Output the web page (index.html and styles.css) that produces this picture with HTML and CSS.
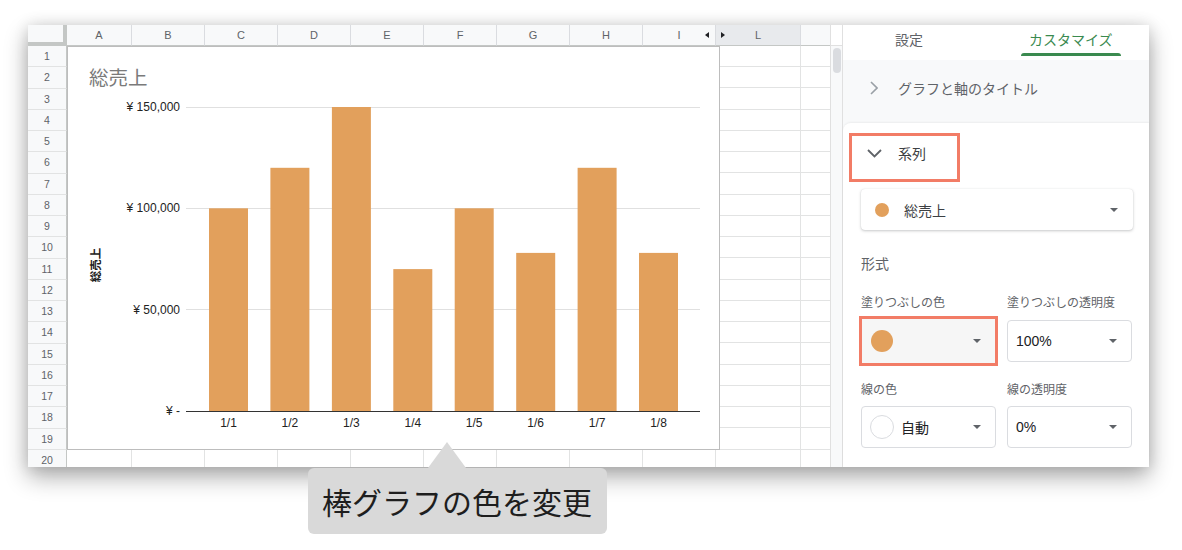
FILE: index.html
```html
<!DOCTYPE html>
<html lang="ja">
<head>
<meta charset="utf-8">
<title>棒グラフの色を変更</title>
<link rel="stylesheet" href="styles.css">
</head>
<body>
<div class="frame">
  <div class="sheet">
    <div class="colhead">
      <div class="corner"></div>
      <div class="ch ch-a">A</div>
      <div class="ch">B</div>
      <div class="ch">C</div>
      <div class="ch">D</div>
      <div class="ch">E</div>
      <div class="ch">F</div>
      <div class="ch">G</div>
      <div class="ch">H</div>
      <div class="ch">I<span class="arr arr-l"></span></div>
      <div class="ch ch-l">L<span class="arr arr-r"></span></div>
      <div class="ch ch-blank"></div>
      <div class="ch-scroll"></div>
    </div>
    <div class="sheet-body">
      <div class="rowheads">
        <div class="rh">1</div><div class="rh">2</div><div class="rh">3</div><div class="rh">4</div>
        <div class="rh">5</div><div class="rh">6</div><div class="rh">7</div><div class="rh">8</div>
        <div class="rh">9</div><div class="rh">10</div><div class="rh">11</div><div class="rh">12</div>
        <div class="rh">13</div><div class="rh">14</div><div class="rh">15</div><div class="rh">16</div>
        <div class="rh">17</div><div class="rh">18</div><div class="rh">19</div><div class="rh">20</div>
      </div>
      <div class="cells">
        <div class="col col-a"></div>
        <div class="col"></div><div class="col"></div><div class="col"></div><div class="col"></div>
        <div class="col"></div><div class="col"></div><div class="col"></div><div class="col"></div>
        <div class="col col-l"></div>
        <div class="col col-blank"></div>
      </div>
      <div class="vscroll"><div class="thumb"></div></div>
    </div>
    <div class="chart">
      <svg width="651" height="402" viewBox="0 0 651 402">
        <text class="c-title" x="21" y="29">総売上</text>
        <g class="gridlines">
          <line x1="118" x2="632" y1="60.5" y2="60.5"/>
          <line x1="118" x2="632" y1="161.5" y2="161.5"/>
          <line x1="118" x2="632" y1="262.5" y2="262.5"/>
        </g>
        <g class="ylabs">
          <text x="112" y="60">¥ 150,000</text>
          <text x="112" y="161">¥ 100,000</text>
          <text x="112" y="263">¥ 50,000</text>
          <text x="112" y="364">¥ -</text>
        </g>
        <g class="bars">
          <rect x="141" y="161.3" width="39" height="202.7"/>
          <rect x="202.4" y="120.8" width="39" height="243.2"/>
          <rect x="263.9" y="60" width="39" height="304"/>
          <rect x="325.3" y="222.1" width="39" height="141.9"/>
          <rect x="386.7" y="161.3" width="39" height="202.7"/>
          <rect x="448.2" y="205.9" width="39" height="158.1"/>
          <rect x="509.6" y="120.8" width="39" height="243.2"/>
          <rect x="571" y="205.9" width="39" height="158.1"/>
        </g>
        <line class="axis" x1="118" x2="632" y1="364.5" y2="364.5"/>
        <g class="xlabs">
          <text x="160.5" y="376">1/1</text>
          <text x="221.9" y="376">1/2</text>
          <text x="283.4" y="376">1/3</text>
          <text x="344.8" y="376">1/4</text>
          <text x="406.2" y="376">1/5</text>
          <text x="467.7" y="376">1/6</text>
          <text x="529.1" y="376">1/7</text>
          <text x="590.5" y="376">1/8</text>
        </g>
        <text class="ytitle" transform="translate(27 218) rotate(-90)">総売上</text>
      </svg>
    </div>
  </div>

  <div class="panel">
    <div class="tabs">
      <div class="tab">設定</div>
      <div class="tab tab-active">カスタマイズ</div>
    </div>
    <div class="acc-row">
      <svg class="chev-r" width="8" height="14" viewBox="0 0 8 14"><path d="M1 1 L7 7 L1 13" fill="none" stroke="#9aa0a6" stroke-width="1.6"/></svg>
      <span>グラフと軸のタイトル</span>
    </div>
    <div class="card">
      <div class="sec-head">
        <svg width="15" height="9" viewBox="0 0 15 9"><path d="M1 1 L7.5 7.5 L14 1" fill="none" stroke="#5f6368" stroke-width="1.8"/></svg>
        <span>系列</span>
      </div>
      <div class="series">
        <span class="dot"></span>
        <span class="series-name">総売上</span>
        <span class="caret"></span>
      </div>
      <div class="fmt-label">形式</div>
      <div class="grid2 labels1">
        <div class="field-label">塗りつぶしの色</div>
        <div class="field-label">塗りつぶしの透明度</div>
      </div>
      <div class="grid2 controls1">
        <div class="dd-active">
          <span class="swatch"></span>
          <span class="caret"></span>
        </div>
        <div class="dd"><span>100%</span><span class="caret"></span></div>
      </div>
      <div class="grid2 labels2">
        <div class="field-label">線の色</div>
        <div class="field-label">線の透明度</div>
      </div>
      <div class="grid2 controls2">
        <div class="dd dd-wide"><span class="swatch-empty"></span><span class="auto">自動</span><span class="caret"></span></div>
        <div class="dd"><span>0%</span><span class="caret"></span></div>
      </div>
    </div>
  </div>
</div>
<div class="tip">棒グラフの色を変更</div>
</body>
</html>
```
FILE: styles.css
```css
* { box-sizing: border-box; }
html, body { margin: 0; background: #fff; }
body {
  width: 1182px;
  height: 550px;
  overflow: hidden;
  position: relative;
  padding: 25px 0 0 28px;
  font-family: "Liberation Sans", "Noto Sans CJK JP", sans-serif;
}

.frame {
  display: flex;
  width: 1121px;
  height: 442px;
  background: #fff;
  box-shadow: 0 10px 22px rgba(0,0,0,0.32), 0 0 14px rgba(0,0,0,0.12);
}

/* ---------- sheet ---------- */
.sheet {
  width: 814px;
  flex: none;
  position: relative;
  display: flex;
  flex-direction: column;
  overflow: hidden;
}
.colhead { display: flex; height: 21px; flex: none; }
.corner {
  width: 39px;
  background: #f8f9fa;
  border-right: 4px solid #c4c7c5;
  border-bottom: 4px solid #c4c7c5;
}
.ch {
  width: 73px;
  position: relative;
  background: #f8f9fa;
  border-right: 1px solid #dadce0;
  border-bottom: 1px solid #c4c7c5;
  font-size: 11px;
  color: #5f6368;
  display: flex;
  align-items: center;
  justify-content: center;
}
.ch-a { width: 65px; }
.ch-l { width: 85px; background: #e8eaed; }
.ch-blank { width: 29px; border-right: none; }
.ch-scroll { width: 12px; background: #fff; border-left: 1px solid #e0e0e0; border-bottom: 1px solid #e0e0e0; }
.arr {
  position: absolute;
  top: 7px;
  width: 0; height: 0;
  border-top: 3px solid transparent;
  border-bottom: 3px solid transparent;
}
.arr-l { right: 6px; border-right: 4px solid #202124; }
.arr-r { left: 5px; border-left: 4px solid #202124; }

.sheet-body { display: flex; flex: 1; min-height: 0; }
.rowheads { width: 39px; flex: none; }
.rh {
  height: 21.25px;
  background: #f8f9fa;
  border-right: 1px solid #c4c7c5;
  border-bottom: 1px solid #e2e3e3;
  font-size: 10.5px;
  color: #5f6368;
  display: flex;
  align-items: center;
  justify-content: center;
}
.cells {
  display: flex;
  width: 763px;
  flex: none;
  background: repeating-linear-gradient(to bottom, #fff 0, #fff 20.25px, #e2e3e3 20.25px, #e2e3e3 21.25px);
}
.col { width: 73px; flex: none; border-right: 1px solid #e2e3e3; }
.col-a { width: 65px; }
.col-l { width: 85px; }
.col-blank { width: 29px; border-right: none; }
.vscroll {
  width: 12px;
  flex: none;
  border-left: 1px solid #e0e0e0;
  background: #f8f9fa;
  padding: 2px 0 0 2px;
}
.thumb { width: 8px; height: 25px; background: #dadce0; border-radius: 4px; }

.chart {
  position: absolute;
  left: 39px;
  top: 21px;
  width: 653px;
  height: 404px;
  background: #fff;
  border: 1px solid #bdbdbd;
}
.chart svg { display: block; }
.c-title {
  font-family: "Noto Sans CJK JP", sans-serif;
  font-size: 19.5px;
  fill: #7a7a7a;
  dominant-baseline: central;
}
.gridlines line { stroke: #e0e0e0; stroke-width: 1; }
.axis { stroke: #333; stroke-width: 1; }
.bars rect { fill: #e2a05c; }
.ylabs text {
  font-size: 12px;
  fill: #222;
  text-anchor: end;
  dominant-baseline: central;
}
.xlabs text {
  font-size: 12px;
  fill: #222;
  text-anchor: middle;
  dominant-baseline: central;
}
.ytitle {
  font-family: "Noto Sans CJK JP", sans-serif;
  font-size: 11.5px;
  font-weight: 700;
  fill: #222;
  text-anchor: middle;
  dominant-baseline: central;
}

/* ---------- panel ---------- */
.panel {
  width: 307px;
  flex: none;
  border-left: 1px solid #e0e0e0;
  background: #f8f9fa;
  display: flex;
  flex-direction: column;
  font-family: "Noto Sans CJK JP", "Liberation Sans", sans-serif;
}
.tabs {
  height: 35px;
  flex: none;
  background: #fff;
  display: flex;
  padding-left: 52px;
}
.tab {
  height: 31px;
  font-size: 14px;
  line-height: 29px;
  color: #5f6368;
  position: relative;
}
.tab-active {
  color: #3a8a4f;
  margin-left: 98px;
  padding: 0 8px;
}
.tab-active::after {
  content: "";
  position: absolute;
  left: 0; right: 0; bottom: 0;
  height: 3px;
  background: #3a8a4f;
  border-radius: 3px 3px 0 0;
}
.acc-row {
  height: 63px;
  flex: none;
  display: flex;
  align-items: center;
  padding: 0 0 7px 27px;
  gap: 20px;
  font-size: 14px;
  color: #5f6368;
}
.chev-r { display: block; }
.card {
  flex: 1;
  background: #fff;
  border-radius: 8px 0 0 0;
  box-shadow: 0 -1px 2px rgba(0,0,0,0.05);
  padding-top: 10px;
}
.sec-head {
  margin-left: 6px;
  width: 111px;
  height: 49px;
  border: 3px solid #f27c66;
  display: flex;
  align-items: center;
  padding: 0 0 9px 15px;
  gap: 16px;
  font-size: 14px;
  line-height: 20px;
  color: #3c4043;
}
.sec-head svg { display: block; }
.series {
  margin: 7px 0 0 18px;
  width: 272px;
  height: 41px;
  border-radius: 4px;
  box-shadow: 0 1px 3px rgba(60,64,67,0.28), 0 0 1px rgba(60,64,67,0.15);
  display: flex;
  align-items: center;
  padding: 0 15px 0 14px;
}
.dot { width: 14px; height: 14px; border-radius: 50%; background: #e2a05c; flex: none; }
.series-name { margin-left: 15px; font-size: 14px; color: #3c4043; }
.caret {
  margin-left: auto;
  width: 0; height: 0;
  border-left: 4px solid transparent;
  border-right: 4px solid transparent;
  border-top: 4px solid #5f6368;
  flex: none;
}
.fmt-label {
  margin: 23px 0 0 18px;
  font-size: 14px;
  line-height: 20px;
  color: #5f6368;
}
.grid2 {
  display: grid;
  grid-template-columns: 146px 125px;
  margin-left: 18px;
  align-items: center;
}
.field-label { font-size: 12px; line-height: 18px; color: #5f6368; }
.labels1 { margin-top: 20px; }
.controls1 { margin-top: 5px; height: 50px; }
.labels2 { margin-top: 14px; }
.controls2 { margin-top: 8px; }
.dd-active {
  margin-left: -2px;
  width: 139px;
  height: 50px;
  border: 3px solid #f27c66;
  background: #f6f6f6;
  display: flex;
  align-items: center;
  padding: 0 14px 0 9px;
}
.swatch { width: 22px; height: 22px; border-radius: 50%; background: #e2a05c; flex: none; }
.dd {
  width: 125px;
  height: 42px;
  border: 1px solid #dadce0;
  border-radius: 4px;
  display: flex;
  align-items: center;
  padding: 0 14px 0 8px;
  font-family: "Liberation Sans", "Noto Sans CJK JP", sans-serif;
  font-size: 14px;
  color: #202124;
  background: #fff;
}
.dd-wide { width: 135px; }
.swatch-empty {
  width: 24px; height: 24px;
  border-radius: 50%;
  border: 1px solid #dadce0;
  background: #fff;
  flex: none;
}
.auto { margin-left: 7px; font-family: "Noto Sans CJK JP", sans-serif; color: #202124; }

/* ---------- callout ---------- */
.tip {
  position: absolute;
  left: 308px;
  top: 468px;
  width: 299px;
  height: 66px;
  background: #d9d9d9;
  border-radius: 6px;
  padding-left: 14px;
  font-family: "Noto Sans CJK JP", sans-serif;
  font-size: 30px;
  line-height: 66px;
  color: #1e1e1e;
  white-space: nowrap;
}
.tip::before {
  content: "";
  position: absolute;
  left: 120px;
  top: -26px;
  width: 0; height: 0;
  border-left: 19px solid transparent;
  border-right: 19px solid transparent;
  border-bottom: 26px solid #d9d9d9;
}
```
